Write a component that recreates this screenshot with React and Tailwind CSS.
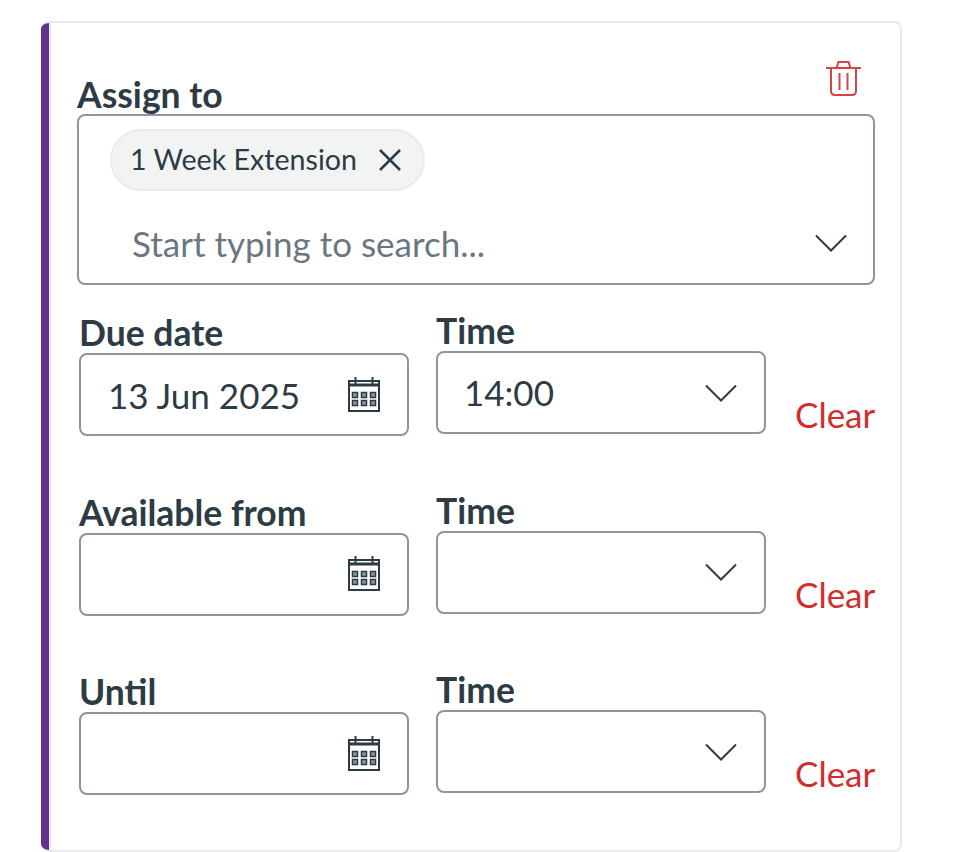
const rows = [
  { label: 'Due date', date: '13 Jun 2025', time: '14:00' },
  { label: 'Available from', date: '', time: '' },
  { label: 'Until', date: '', time: '' },
];

const TrashIcon = () => (
  <svg width="35" height="35" viewBox="0 0 35 35" fill="none" stroke="#d64545" strokeWidth="2">
    <path d="M0 7h35" />
    <path d="M10.500 7l2-6h10l2 6" />
    <path d="M5 8v22q0 4 4 4h17q4 0 4-4V8" />
    <path d="M13.500 12v17M21.500 12v17" />
  </svg>
);

const CalendarIcon = () => (
  <svg width="32" height="35" viewBox="0 0 32 35" fill="none" stroke="#2d3b45">
    <path d="M1 4h30v30H1z" strokeWidth="2" />
    <path d="M1 8h30" strokeWidth="3" />
    <path d="M7.500 0v7M24.500 0v7" strokeWidth="2" />
    {[4, 13, 22].map((x) => (
      <g key={x} fill="#8d959f" strokeWidth="1.500">
        <rect x={x + 0.5} y="15.500" width="5" height="5" />
        <rect x={x + 0.5} y="23.500" width="5" height="5" />
      </g>
    ))}
  </svg>
);

const Chevron = () => (
  <svg width="32" height="18" viewBox="0 0 32 18" fill="none" stroke="#2d3b45" strokeWidth="2">
    <path d="M1 1.500l15 15 15-15" />
  </svg>
);

const CloseIcon = () => (
  <svg width="22" height="22" viewBox="0 0 22 22" fill="none" stroke="#2d3b45" strokeWidth="2.500" className="ml-[22px]">
    <path d="M1 1l20 20M21 1L1 21" />
  </svg>
);

const DateRow = ({ label, date, time }) => (
  <div className="flex items-end">
    <div className="w-[330px] ml-[2px]">
      <div className="text-[35.500px] leading-[32px] pb-[4px] font-bold text-[#2d3b45]">{label}</div>
      <div className="h-[83px] border-2 border-[#8d959f] rounded-lg flex items-center justify-between pl-[27px] pr-[27px] text-[35px] text-[#2d3b45]">
        <span className="pt-[1px]">{date}</span>
        <div className="pb-[1px]">
          <CalendarIcon />
        </div>
      </div>
    </div>
    <div className="w-[330px] ml-[27px] mb-[2px]">
      <div className="text-[35.500px] leading-[32px] pb-[4px] font-bold text-[#2d3b45]">Time</div>
      <div className="h-[83px] border-2 border-[#8d959f] rounded-lg flex items-center justify-between pl-[26px] pr-[27px] text-[35px] text-[#2d3b45]">
        <span className="pb-[1px]">{time}</span>
        <Chevron />
      </div>
    </div>
    <div className="ml-[29px] mb-[2px] text-[35px] leading-[40px] text-[#d12e2e]">Clear</div>
  </div>
);

export default function App() {
  return (
    <div className="bg-white h-[852px] pt-[21px] pl-[41px] pr-[70px]" style={{ fontFamily: 'Lato, sans-serif' }}>
      <div className="h-[831px] border-2 border-l-0 border-[#e8eaec] rounded-lg bg-white flex overflow-hidden">
        <div className="w-[8px] bg-[#63328f] shrink-0" />
        <div className="w-[2px] bg-[#ebe6f2] shrink-0" />
        <div className="flex-1 pl-[26px] pr-[25px]">
          <div className="flex justify-end pt-[38px] pr-[14px]">
            <TrashIcon />
          </div>
          <div className="text-[35.500px] leading-[34px] pb-[2px] font-bold text-[#2d3b45] mt-[-18px]">Assign to</div>
          <div className="h-[171px] border-2 border-[#8d959f] rounded-lg pl-[31px] pr-[26px] pt-[13px]">
            <div className="inline-flex items-center h-[62px] pl-[18px] pr-[22px] rounded-full bg-[#f2f4f4] border-2 border-[#e8eaec] text-[28.600px] text-[#2d3b45]">
              <span className="pb-[1px]">1 Week Extension</span>
              <CloseIcon />
            </div>
            <div className="flex items-center justify-between mt-[27px] pl-[22px] text-[35px] leading-[40px] text-[#6b7780]">
              <span className="pt-[5px]">Start typing to search...</span>
              <div className="pt-[4px]">
                <Chevron />
              </div>
            </div>
          </div>
          <div className="flex flex-col gap-[58.500px] mt-[30px]">
            {rows.map((r) => (
              <DateRow key={r.label} label={r.label} date={r.date} time={r.time} />
            ))}
          </div>
        </div>
      </div>
    </div>
  );
}
